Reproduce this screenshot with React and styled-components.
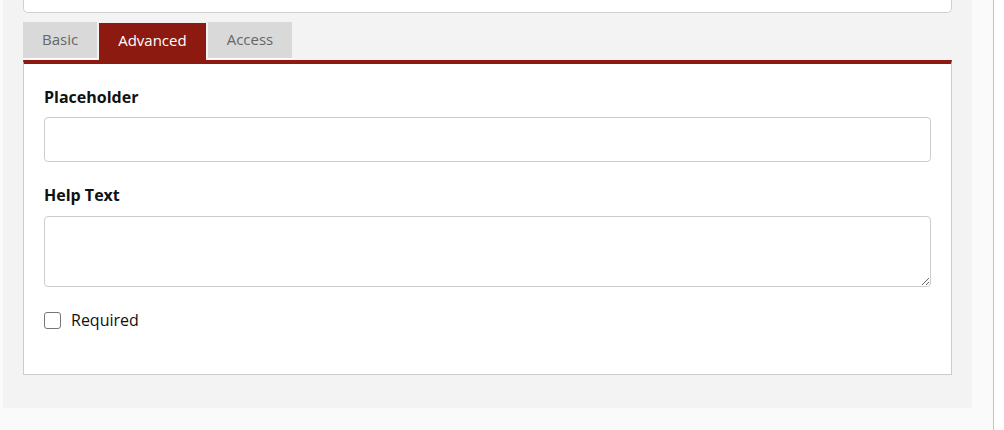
import React, { useState } from "react";
import styled, { createGlobalStyle } from "styled-components";

const Global = createGlobalStyle`
  html, body { margin: 0; padding: 0; background: #ffffff; }
  body { font-family: "Open Sans", "Liberation Sans", sans-serif; color: #111; }
  * { box-sizing: border-box; }
`;

const Page = styled.div`
  width: 994px;
  height: 430px;
  background: #fafafa;
  border-right: 1px solid #c6c6c6;
  padding-left: 3px;
  overflow: hidden;
`;

const Panel = styled.div`
  width: 969px;
  margin-top: -30px;
  background: #f3f3f3;
  padding: 0 20px 33px 20px;
`;

const TopField = styled.div`
  height: 43px;
  background: #fff;
  border: 1px solid #cfcfcf;
  border-top: none;
  border-radius: 0 0 5px 5px;
`;

const TabList = styled.div`
  display: flex;
  align-items: flex-end;
  gap: 2px;
  margin-top: 9px;
`;

const Tab = styled.button`
  font-family: inherit;
  font-size: 15px;
  border: none;
  cursor: pointer;
  padding: 0 19px 3px;
  height: ${(p) => (p.$active ? "37px" : "36px")};
  margin-bottom: ${(p) => (p.$active ? "0" : "2px")};
  background: ${(p) => (p.$active ? "#8c1a11" : "#d9d9d9")};
  color: ${(p) => (p.$active ? "#ffffff" : "#666666")};
  box-shadow: ${(p) => (p.$active ? "none" : "0 1px 0 #ffffff")};
`;

const TabBody = styled.div`
  background: #fff;
  border: 1px solid #cccccc;
  border-top: 4px solid #8c1a11;
  padding: 21px 20px 42px 20px;
  display: flex;
  flex-direction: column;
  gap: 21px;
`;

const Field = styled.div`
  display: flex;
  flex-direction: column;
`;

const Label = styled.label`
  font-weight: 700;
  font-size: 16px;
  line-height: 24px;
  margin-bottom: 8px;
  color: #111;
`;

const Input = styled.input`
  height: 45px;
  border: 1px solid #cccccc;
  border-radius: 4px;
  font-family: inherit;
  font-size: 15px;
  padding: 0 10px;
  outline: none;
`;

const TextArea = styled.textarea`
  height: 71px;
  border: 1px solid #cccccc;
  border-radius: 4px;
  font-family: inherit;
  font-size: 15px;
  padding: 8px 10px;
  resize: vertical;
  outline: none;
  display: block;
  margin-top: 1px;
`;

const CheckRow = styled.label`
  display: flex;
  align-items: center;
  gap: 10px;
  font-size: 16px;
  line-height: 24px;
  color: #111;
`;

const Box = styled.input`
  appearance: none;
  width: 17px;
  height: 17px;
  margin: 0;
  border: 1px solid #767676;
  border-radius: 3px;
  background: #fff;
`;

export default function App() {
  const [tab, setTab] = useState("Advanced");
  return (
    <>
      <Global />
      <Page>
        <Panel>
          <TopField />
          <TabList>
            {["Basic", "Advanced", "Access"].map((t) => (
              <Tab key={t} $active={t === tab} onClick={() => setTab(t)}>
                {t}
              </Tab>
            ))}
          </TabList>
          <TabBody>
            <Field>
              <Label>Placeholder</Label>
              <Input type="text" />
            </Field>
            <Field>
              <Label>Help Text</Label>
              <TextArea />
            </Field>
            <CheckRow>
              <Box type="checkbox" />
              Required
            </CheckRow>
          </TabBody>
        </Panel>
      </Page>
    </>
  );
}
